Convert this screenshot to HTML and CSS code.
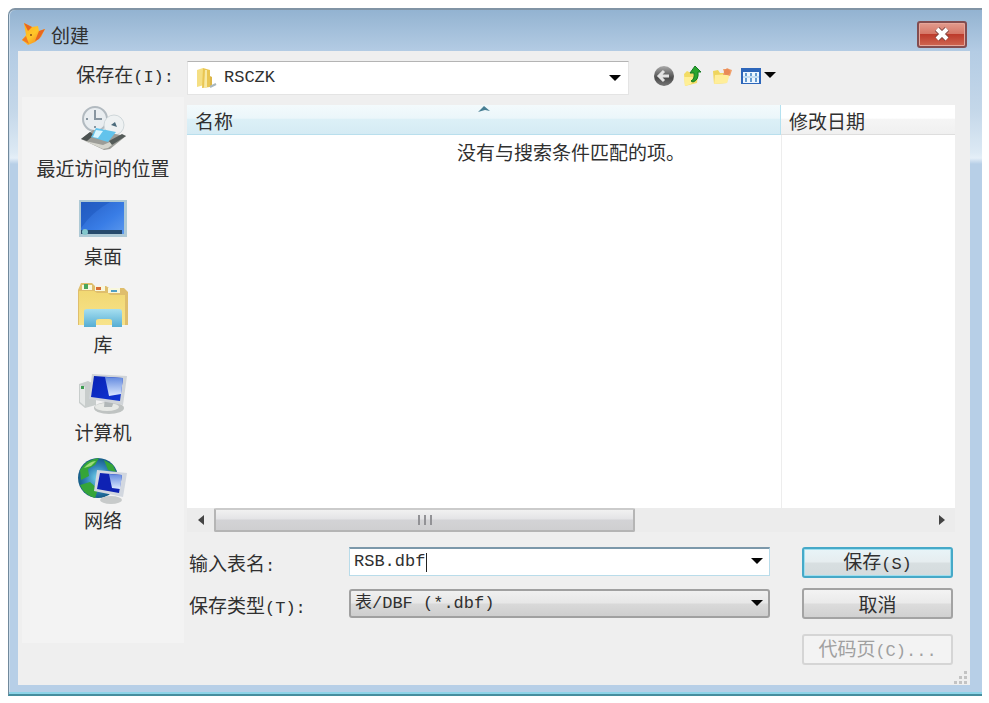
FILE: index.html
```html
<!DOCTYPE html>
<html lang="zh-CN">
<head>
<meta charset="utf-8">
<title>创建</title>
<link rel="stylesheet" href="styles.css">
</head>
<body>
<main class="window">
  <header class="titlebar">
    <svg class="app-icon" viewBox="0 0 26 24" aria-hidden="true">
      <defs><linearGradient id="fox" x1="0" x2="1" y1="0" y2="1"><stop offset="0" stop-color="#ffab1c"/><stop offset=".5" stop-color="#ffc629"/><stop offset="1" stop-color="#ee681c"/></linearGradient></defs>
      <path d="M3 1 11 5 17 4 18 9 24 7 20 15 14 20 7 23 1 18 5 13Z" fill="url(#fox)"/>
      <path d="M3 1 11 5 7 9ZM18 9 24 7 18 17 14 19Z" fill="#e9651f"/>
      <path d="M1 18 5 14 8 22Z" fill="#f17922"/><circle cx="10" cy="13" r="1" fill="#8a4a16"/>
    </svg>
    <h1 class="title">创建</h1>
    <button class="close" type="button" aria-label="关闭">
      <svg viewBox="0 0 18 16" aria-hidden="true"><path d="M4 3 14 13M14 3 4 13" stroke="#7d4540" stroke-width="6"/><path d="M4 3 14 13M14 3 4 13" stroke="#fff" stroke-width="4"/></svg>
    </button>
  </header>

  <form class="client">
    <div class="toolbar">
      <label class="look-label" for="folder">保存在<span class="latin">(I):</span></label>
      <div class="folder-box">
        <svg class="folder-icon" viewBox="0 0 22 22" aria-hidden="true"><path d="M2 3 8 1 9 18 2 20Z" fill="#f5df83"/><path d="M8 1 15 3V20L7 21Z" fill="#e9c653"/><path d="M10 3 12 3 12 20 9 21Z" fill="#f8e9a4"/><path d="M15 9 17 10V18L15 20Z" fill="#dcb648"/><path d="M15 20 21 17" stroke="#a9b7bd" stroke-width="2"/></svg>
        <select id="folder" class="folder-select"><option>RSCZK</option></select>
        <svg class="arrow" viewBox="0 0 12 7" aria-hidden="true"><path d="M0 0H12L6 6Z"/></svg>
      </div>
      <div class="tools">
        <button type="button" class="tool" aria-label="后退"><svg viewBox="0 0 20 20" aria-hidden="true"><defs><linearGradient id="back" x2="0" y2="1"><stop stop-color="#aaa"/><stop offset=".6" stop-color="#4c4c4c"/><stop offset="1" stop-color="#777"/></linearGradient></defs><circle cx="10" cy="10" r="10" fill="url(#back)"/><path d="M10 5 5 10 10 15M5 10H15" fill="none" stroke="#e4e4e4" stroke-width="3"/></svg></button>
        <button type="button" class="tool" aria-label="向上一级"><svg viewBox="0 0 20 20" aria-hidden="true"><path d="M1 8 4 5 8 7 15 8 14 17 2 20Z" fill="#f3dc65"/><path d="M1 11 10 11 8 18 2 20Z" fill="#ffef96"/><path d="M8 15Q12 13 11 7H7L12 0 18 6H15Q16 14 10 16Z" fill="#29a52d" stroke="#147b22" stroke-width="1"/></svg></button>
        <button type="button" class="tool" aria-label="新建文件夹"><svg viewBox="0 0 20 20" aria-hidden="true"><path d="M1 5 6 4 8 7H16L15 17 2 18Z" fill="#efd55e"/><path d="M3 9 18 8 15 17 2 18Z" fill="#ffee9a"/><path d="M15 2 17 3 20 4 19 7 18 10 15 9 11 9 12 6 11 3 14 3Z" fill="#f0a06b"/><circle cx="15" cy="6" r="3" fill="#e98a57"/></svg></button>
        <button type="button" class="tool tool-view" aria-label="查看菜单"><svg viewBox="0 0 20 18" aria-hidden="true"><path d="M0 1H20V17H0Z" fill="#2d66ba"/><path d="M2 5H18V16H2Z" fill="#eef7ff"/><path d="M5 6V9M5 11V15M10 6V9M10 11V15M15 6V9M15 11V15" stroke="#659bd0" stroke-width="2"/><path d="M2 10H18" stroke="#9cc4e5" stroke-width="1"/></svg><svg class="arrow" viewBox="0 0 12 7" aria-hidden="true"><path d="M0 0H12L6 6Z"/></svg></button>
      </div>
    </div>

    <div class="content">
      <nav class="places">
        <button type="button" class="place">
          <svg viewBox="0 0 50 48" aria-hidden="true">
            <circle cx="17" cy="15" r="12" fill="#e9edf0" stroke="#b2bac0" stroke-width="2"/><path d="M17 6V15H24M17 24V22M8 15H10" fill="none" stroke="#8795a0" stroke-width="2"/>
            <circle cx="36" cy="21" r="10" fill="#eef1f2" stroke="#cfd7da" stroke-width="1"/><path d="m33 21 4-3 2 5Z" fill="#4b6a7b"/>
            <path d="M3 35 15 26 48 32 32 45 26 46Z" fill="#9c9d98"/><path d="M3 35 12 28 16 31 9 37Z" fill="#4b5150"/><path d="M13 33 18 24 38 28 30 38Z" fill="#62c3ec"/><path d="M18 26 25 27 20 34 15 33Z" fill="#d7f5ff"/><path d="M7 37 25 41 46 32 30 44 25 45Z" fill="#d5d5cd"/><path d="M31 37 44 30 48 32 34 41Z" fill="#545b59"/>
          </svg><span>最近访问的位置</span></button>
        <button type="button" class="place">
          <svg viewBox="0 0 50 48" aria-hidden="true"><defs><linearGradient id="desk" x2="1" y2="1"><stop stop-color="#265fc6"/><stop offset=".6" stop-color="#397de6"/><stop offset="1" stop-color="#5b98ed"/></linearGradient></defs><path d="M1 8H49V45H1Z" fill="#aec9d5"/><path d="M3 10H46V42H3Z" fill="url(#desk)"/><path d="M3 10H32Q14 20 3 36Z" fill="#1c55bb" opacity=".5"/><path d="M3 38H44V42H3Z" fill="#26496b"/><circle cx="7" cy="40" r="3" fill="#83c7cc"/></svg><span>桌面</span></button>
        <button type="button" class="place">
          <svg viewBox="0 0 50 48" aria-hidden="true"><defs><linearGradient id="lib" x2="0" y2="1"><stop stop-color="#f1d873"/><stop offset="1" stop-color="#f7e38b"/></linearGradient><linearGradient id="stand" x2="0" y2="1"><stop stop-color="#a6dff0"/><stop offset="1" stop-color="#55add3"/></linearGradient></defs><path d="M0 10 3 3H14L17 6H28L31 8H46L50 12V45H0Z" fill="#dfbe6c"/><path d="M4 5H14V10H4ZM17 6H27V11H17ZM30 8H42V13H30Z" fill="#f8f7dd"/><path d="M6 4H10V9H6Z" fill="#48a55b"/><path d="M18 7H23V10H18Z" fill="#d86c35"/><path d="M33 10H39V12H33Z" fill="#519fc5"/><path d="M1 11H16L19 13H30L32 15H47V45H1Z" fill="url(#lib)"/><path d="M6 31Q6 29 9 29H41Q44 29 44 32V47H34V41Q34 39 31 39H21Q18 39 18 41V47H6Z" fill="url(#stand)"/></svg><span>库</span></button>
        <button type="button" class="place">
          <svg viewBox="0 0 50 48" aria-hidden="true"><defs><linearGradient id="screen" x2="1" y2="1"><stop stop-color="#0822b5"/><stop offset="1" stop-color="#1037d5"/></linearGradient><linearGradient id="shine" x2="0" y2="1"><stop stop-color="#6289df"/><stop offset="1" stop-color="#dce9ff"/></linearGradient></defs><path d="M1 16 10 13 18 17V37L7 40 1 35Z" fill="#c8cdcc"/><path d="M2 17 7 19V38L2 34Z" fill="#e5e8e7"/><path d="M3 18H6V21H3Z" fill="#3f9e52"/><ellipse cx="31" cy="40" rx="15" ry="6" fill="#bfc3c2"/><ellipse cx="29" cy="39" rx="12" ry="4" fill="#e7e9e6"/><path d="M27 30H37L34 39H26Z" fill="#b1b7b8"/><path d="M14 6 49 8 45 37 11 31Z" fill="#d0d4d8"/><path d="M16 8 45 10 42 33 13 29Z" fill="url(#screen)"/><path d="M27 9 45 10 43 26 31 28Z" fill="url(#shine)"/></svg><span>计算机</span></button>
        <button type="button" class="place">
          <svg viewBox="0 0 50 48" aria-hidden="true"><defs><radialGradient id="globe"><stop stop-color="#76d6ec"/><stop offset=".6" stop-color="#3282b8"/><stop offset="1" stop-color="#155c86"/></radialGradient></defs><circle cx="20" cy="22" r="20" fill="url(#globe)"/><path d="M2 14Q9 3 21 2L17 9 10 13 11 20 3 24ZM2 29 12 26 20 33 17 42Q6 39 2 29ZM26 4 35 9 38 16 30 14Z" fill="#35a538"/><path d="M6 12Q12 5 18 5L13 10Z" fill="#9ddc78"/><ellipse cx="33" cy="44" rx="11" ry="4" fill="#c7caca"/><path d="M19 14 49 17 45 41 16 35Z" fill="#d2d7df"/><path d="M22 17 44 19 41 37 19 33Z" fill="#0e22b3"/><path d="M31 18 44 19 42 33 34 32Z" fill="url(#shine)"/></svg><span>网络</span></button>
      </nav>

      <section class="main">
        <div class="list">
          <table class="files">
            <thead><tr><th class="name-column">名称<svg class="sort" viewBox="0 0 12 6" aria-hidden="true"><path d="M0 6 6 0 12 5 7 4Z" fill="#487f94"/></svg></th><th class="date-column">修改日期</th></tr></thead>
            <tbody><tr><td class="empty" colspan="2">没有与搜索条件匹配的项。</td></tr></tbody>
          </table>
          <div class="scrollbar">
            <button type="button" class="scroll-arrow" aria-label="向左滚动"><svg viewBox="0 0 8 10" aria-hidden="true"><path d="M7 0V10L1 5Z"/></svg></button>
            <div class="track"><div class="thumb"><i></i><i></i><i></i></div></div>
            <button type="button" class="scroll-arrow" aria-label="向右滚动"><svg viewBox="0 0 8 10" aria-hidden="true"><path d="M1 0V10L7 5Z"/></svg></button>
          </div>
        </div>

        <div class="bottom">
          <div class="fields">
            <label for="table-name">输入表名<span class="latin">:</span></label>
            <div class="field"><input id="table-name" class="control" type="text" value="RSB.dbf"><span class="caret"></span><svg class="arrow" viewBox="0 0 12 7" aria-hidden="true"><path d="M0 0H12L6 6Z"/></svg></div>
            <label for="save-type">保存类型<span class="latin">(T):</span></label>
            <div class="field"><select id="save-type" class="control type-select"><option>表/DBF (*.dbf)</option></select><svg class="arrow" viewBox="0 0 12 7" aria-hidden="true"><path d="M0 0H12L6 6Z"/></svg></div>
          </div>
          <div class="actions">
            <button type="button" class="action primary">保存<span class="latin">(S)</span></button>
            <button type="button" class="action">取消</button>
            <button type="button" class="action code-page" disabled>代码页<span class="latin">(C)...</span></button>
          </div>
        </div>
      </section>
    </div>
    <svg class="grip" viewBox="0 0 15 13" aria-hidden="true"><path d="M11 0h3v3h-3zM6 5h3v3H6zM11 5h3v3h-3zM1 10h3v3H1zM6 10h3v3H6zM11 10h3v3h-3z" fill="#c3c3c3"/></svg>
  </form>
</main>
</body>
</html>
```
FILE: styles.css
```css
* { box-sizing: border-box; }

body {
  margin: 0;
  padding: 8px 7px 7px 8px;
  min-height: 100vh;
  display: flex;
  background: #fff;
  color: #303030;
  font: 19px/24px "Noto Sans CJK SC", sans-serif;
}

button, input, select {
  margin: 0;
  padding: 0;
  border: 0;
  background: none;
  color: inherit;
  font: inherit;
}

svg { display: block; }

.latin { font: 17px/24px "Liberation Mono", monospace; }

.window {
  flex: 1;
  display: flex;
  flex-direction: column;
  padding: 0 12px 9px 9px;
  border-top: 2px solid #8194a5;
  border-left: 1px solid #71899c;
  border-bottom: 2px solid #468e9e;
  border-radius: 7px 0 0 0;
  background: linear-gradient(#93b3d1, #b4cce4 42px, #c4d7e9 100px, #dce9f4 142px, #e5eff8 148px, #b7cfe7 154px, #b7cfe7);
  box-shadow: inset 0 -2px #8dd4e8, inset 1px 0 #cbdceb;
}

.titlebar {
  height: 41px;
  display: flex;
  align-items: center;
  padding: 0 3px 0 3px;
}

.app-icon { width: 26px; height: 24px; margin-top: 7px; }
.title { margin: 8px auto 0 4px; font-size: 19px; line-height: 24px; font-weight: 400; }

.close {
  width: 50px;
  height: 27px;
  margin-top: 7px;
  display: grid;
  place-items: center;
  border: 2px solid #834d50;
  border-radius: 3px;
  background: linear-gradient(#e29b8e, #d67868 46%, #bd3b2c 50%, #cf6651);
  box-shadow: inset 0 0 0 1px #e6a69a;
}
.close svg { width: 18px; height: 16px; }

.client {
  position: relative;
  flex: 1;
  display: flex;
  flex-direction: column;
  padding: 0 15px 0 4px;
  background: #efefef;
}

.toolbar { height: 46px; display: flex; align-items: center; }
.look-label { width: 165px; padding: 4px 13px 0 0; text-align: right; white-space: nowrap; }

.folder-box {
  flex: 0 1 442px;
  height: 34px;
  margin-top: 8px;
  display: flex;
  align-items: center;
  padding: 0 7px 0 7px;
  border: 1px solid #e4e4e4;
  border-top-color: #b4b4b4;
  background: #fff;
}
.folder-icon { width: 22px; height: 22px; }
.folder-select { appearance: none; flex: 1; min-width: 0; padding-left: 7px; font: 17px/24px "Liberation Mono", monospace; }
.arrow { width: 12px; height: 7px; fill: #050505; }

.tools { display: flex; align-items: center; gap: 9px; margin: 3px 0 0 25px; }
.tool { display: flex; align-items: center; }
.tool svg { width: 20px; height: 20px; }
.tool-view { gap: 3px; }
.tool .arrow { width: 12px; height: 7px; }

.content { flex: 1; display: flex; gap: 3px; }

.places {
  width: 162px;
  margin-bottom: 42px;
  padding-top: 7px;
  display: flex;
  flex-direction: column;
  gap: 12px;
  background: #f3f3f3;
}
.place { display: flex; flex-direction: column; align-items: center; gap: 4px; white-space: nowrap; }
.place svg { width: 50px; height: 48px; overflow: visible; }

.main {
  flex: 1;
  min-width: 0;
  display: flex;
  flex-direction: column;
  gap: 15px;
  padding: 8px 0 20px;
}

.list { flex: 1; display: flex; flex-direction: column; }
.files {
  flex: 1;
  display: flex;
  flex-direction: column;
  background: linear-gradient(#ededed, #ededed) right 173px top / 1px 100% no-repeat #fff;
}
.files thead, .files tbody { display: block; }
.files tr { display: flex; }
.files th { height: 30px; padding: 4px 8px 2px; text-align: left; font-weight: 400; }
.name-column {
  position: relative;
  flex: 1;
  border-right: 1px solid #b5e1f0;
  border-bottom: 1px solid #b9dfed;
  background: linear-gradient(#f3fafc, #ebf6fa 45%, #dcf0f7 50%, #d5ebf4);
}
.date-column { width: 174px; border-bottom: 1px solid #dedede; background: linear-gradient(#fff 45%, #f5f5f5 50%, #f0f0f0); }
.sort { position: absolute; top: 1px; left: 49%; width: 12px; height: 6px; }
.empty { flex: 1; padding: 5px 0; text-align: center; }

.scrollbar { height: 24px; display: flex; background: #ececec; }
.scroll-arrow { width: 27px; display: grid; place-items: center; }
.scroll-arrow svg { width: 8px; height: 10px; fill: #444; }
.track { flex: 1; display: flex; }
.thumb {
  width: 59%;
  display: flex;
  justify-content: center;
  align-items: center;
  gap: 4px;
  border: 2px solid #b5b5b5;
  border-top-color: #cbcbcb;
  border-radius: 2px;
  background: linear-gradient(#f1f1f1, #e4e4e6 45%, #d3d3d6 50%, #cfcfd1);
}
.thumb i { width: 2px; height: 10px; background: #929296; }

.bottom { display: flex; gap: 32px; padding-right: 2px; }
.fields {
  flex: 1;
  display: grid;
  grid-template-columns: 160px 1fr;
  grid-auto-rows: 29px;
  row-gap: 13px;
  padding-left: 2px;
}
.fields label { padding-top: 4px; white-space: nowrap; }
.field { position: relative; display: flex; font: 17px/24px "Liberation Mono", "Noto Sans CJK SC", monospace; }
.field .arrow { position: absolute; right: 7px; top: 11px; pointer-events: none; }
.control {
  width: 100%;
  padding: 0 28px 0 4px;
  border: 1px solid #b9dcea;
  border-top: 2px solid #7c98aa;
  background: #fff;
}
.type-select {
  appearance: none;
  border: 2px solid #a0a0a0;
  border-radius: 3px;
  background: linear-gradient(#f0f0f0, #e7e7e7 48%, #d9d9d9 52%, #cecece);
}
.caret { position: absolute; left: calc(7ch + 6px); top: 6px; width: 1px; height: 19px; background: #222; }

.actions { width: 151px; display: flex; flex-direction: column; gap: 10px; }
.action {
  height: 31px;
  border: 2px solid #a3a3a3;
  border-radius: 3px;
  background: linear-gradient(#f3f3f3, #eaeaea 48%, #dcdcdc 52%, #d1d1d1);
  white-space: nowrap;
}
.primary { border-color: #46a9c8; background: linear-gradient(#e8f4f8, #e6edef 48%, #d8dfe1 52%, #d4dbdd); box-shadow: inset 0 0 0 1px #9fdfef; }
.code-page { margin-top: 5px; border-color: #d5d5d5; background: #f3f3f3; color: #a0a0a0; }

.grip { position: absolute; right: 2px; bottom: 1px; width: 15px; height: 13px; }
```
